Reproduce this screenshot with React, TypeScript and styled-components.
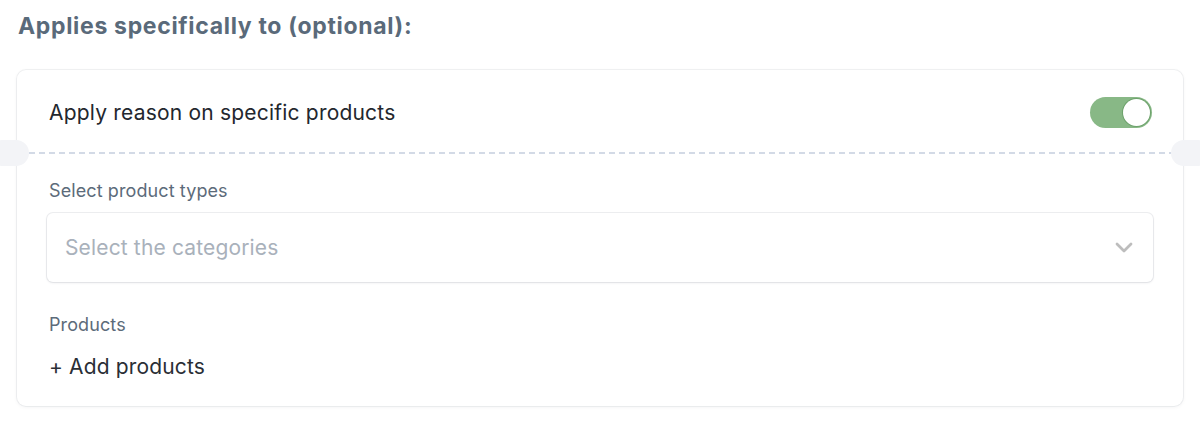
import React from "react";
import styled, { createGlobalStyle } from "styled-components";

const Global = createGlobalStyle`
  html, body { margin: 0; padding: 0; background: #ffffff; }
  body { font-family: Inter, "Liberation Sans", Arial, sans-serif; -webkit-font-smoothing: antialiased; }
  * { box-sizing: border-box; }
`;

const Page = styled.div`
  width: 1200px;
  height: 425px;
  padding: 12px 17px 0 17px;
  overflow: hidden;
`;

const Heading = styled.h2`
  margin: 0 0 0 1px;
  font-size: 23px;
  line-height: 28px;
  font-weight: 650;
  color: #5a6a7a;
  letter-spacing: 0.68px;
`;

const Card = styled.div`
  position: relative;
  margin-top: 30px;
  width: 1166px;
  background: #fff;
  border-radius: 9px;
  box-shadow: 0 0 0 1px rgba(20, 30, 50, 0.055), 0 1px 4px rgba(20, 30, 50, 0.06);
`;

const TopRow = styled.div`
  height: 82px;
  padding: 2px 31px 0 32px;
  display: flex;
  align-items: center;
  justify-content: space-between;
`;

const RowText = styled.span`
  font-size: 21px;
  color: #23272e;
  letter-spacing: 0.2px;
`;

const Toggle = styled.div<{ $on: boolean }>`
  width: 62px;
  height: 31px;
  border-radius: 16px;
  background: ${(p) => (p.$on ? "#88b886" : "#d5d9df")};
  display: flex;
  align-items: center;
  justify-content: ${(p) => (p.$on ? "flex-end" : "flex-start")};
  padding: 0 2px;
`;

const Knob = styled.div`
  width: 27px;
  height: 27px;
  border-radius: 50%;
  background: #fff;
  box-shadow: 0 0 0 1px rgba(60, 120, 60, 0.35);
`;

const Divider = styled.div`
  position: relative;
  height: 1.5px;
  margin: 0 12px;
  background-image: linear-gradient(to right, #d3dae6 0 6px, transparent 6px 10px);
  background-size: 10px 1.5px;
  background-repeat: repeat-x;
`;

const Notch = styled.div<{ $side: "left" | "right" }>`
  position: absolute;
  top: -12px;
  ${(p) => (p.$side === "left" ? "left: -40px;" : "right: -40px;")}
  width: 40px;
  height: 26px;
  border-radius: 13px;
  background: #f3f4f7;
`;

const Body = styled.div`
  padding: 26px 30px 27px 30px;
  display: flex;
  flex-direction: column;
`;

const Label = styled.div`
  font-size: 18px;
  line-height: 22px;
  color: #5c6b7a;
  margin-left: 2px;
  letter-spacing: 0.1px;
`;

const Select = styled.div`
  margin-top: 11px;
  height: 69px;
  border-radius: 6px;
  background: #fff;
  box-shadow: 0 0 0 1px rgba(20, 30, 50, 0.07), 0 1px 3px rgba(20, 30, 50, 0.08);
  display: flex;
  align-items: center;
  justify-content: space-between;
  padding: 0 20px 0 18px;
  margin-bottom: 32px;
`;

const Placeholder = styled.span`
  font-size: 21px;
  color: #a9b1bb;
  letter-spacing: 0.15px;
`;

const AddLink = styled.div`
  margin-top: 18px;
  margin-left: 2px;
  font-size: 21px;
  color: #2a2e35;
  letter-spacing: 0.15px;
`;

const Chevron = () => (
  <svg width="18" height="11" viewBox="0 0 18 11" fill="none">
    <path d="M2 2l7 7 7-7" stroke="#bdbdbd" strokeWidth="2.8" strokeLinecap="round" strokeLinejoin="round" />
  </svg>
);

export default function App() {
  return (
    <>
      <Global />
      <Page>
        <Heading>Applies specifically to (optional):</Heading>
        <Card>
          <TopRow>
            <RowText>Apply reason on specific products</RowText>
            <Toggle $on>
              <Knob />
            </Toggle>
          </TopRow>
          <Divider>
            <Notch $side="left" />
            <Notch $side="right" />
          </Divider>
          <Body>
            <Label>Select product types</Label>
            <Select>
              <Placeholder>Select the categories</Placeholder>
              <Chevron />
            </Select>
            <Label>Products</Label>
            <AddLink>+ Add products</AddLink>
          </Body>
        </Card>
      </Page>
    </>
  );
}
